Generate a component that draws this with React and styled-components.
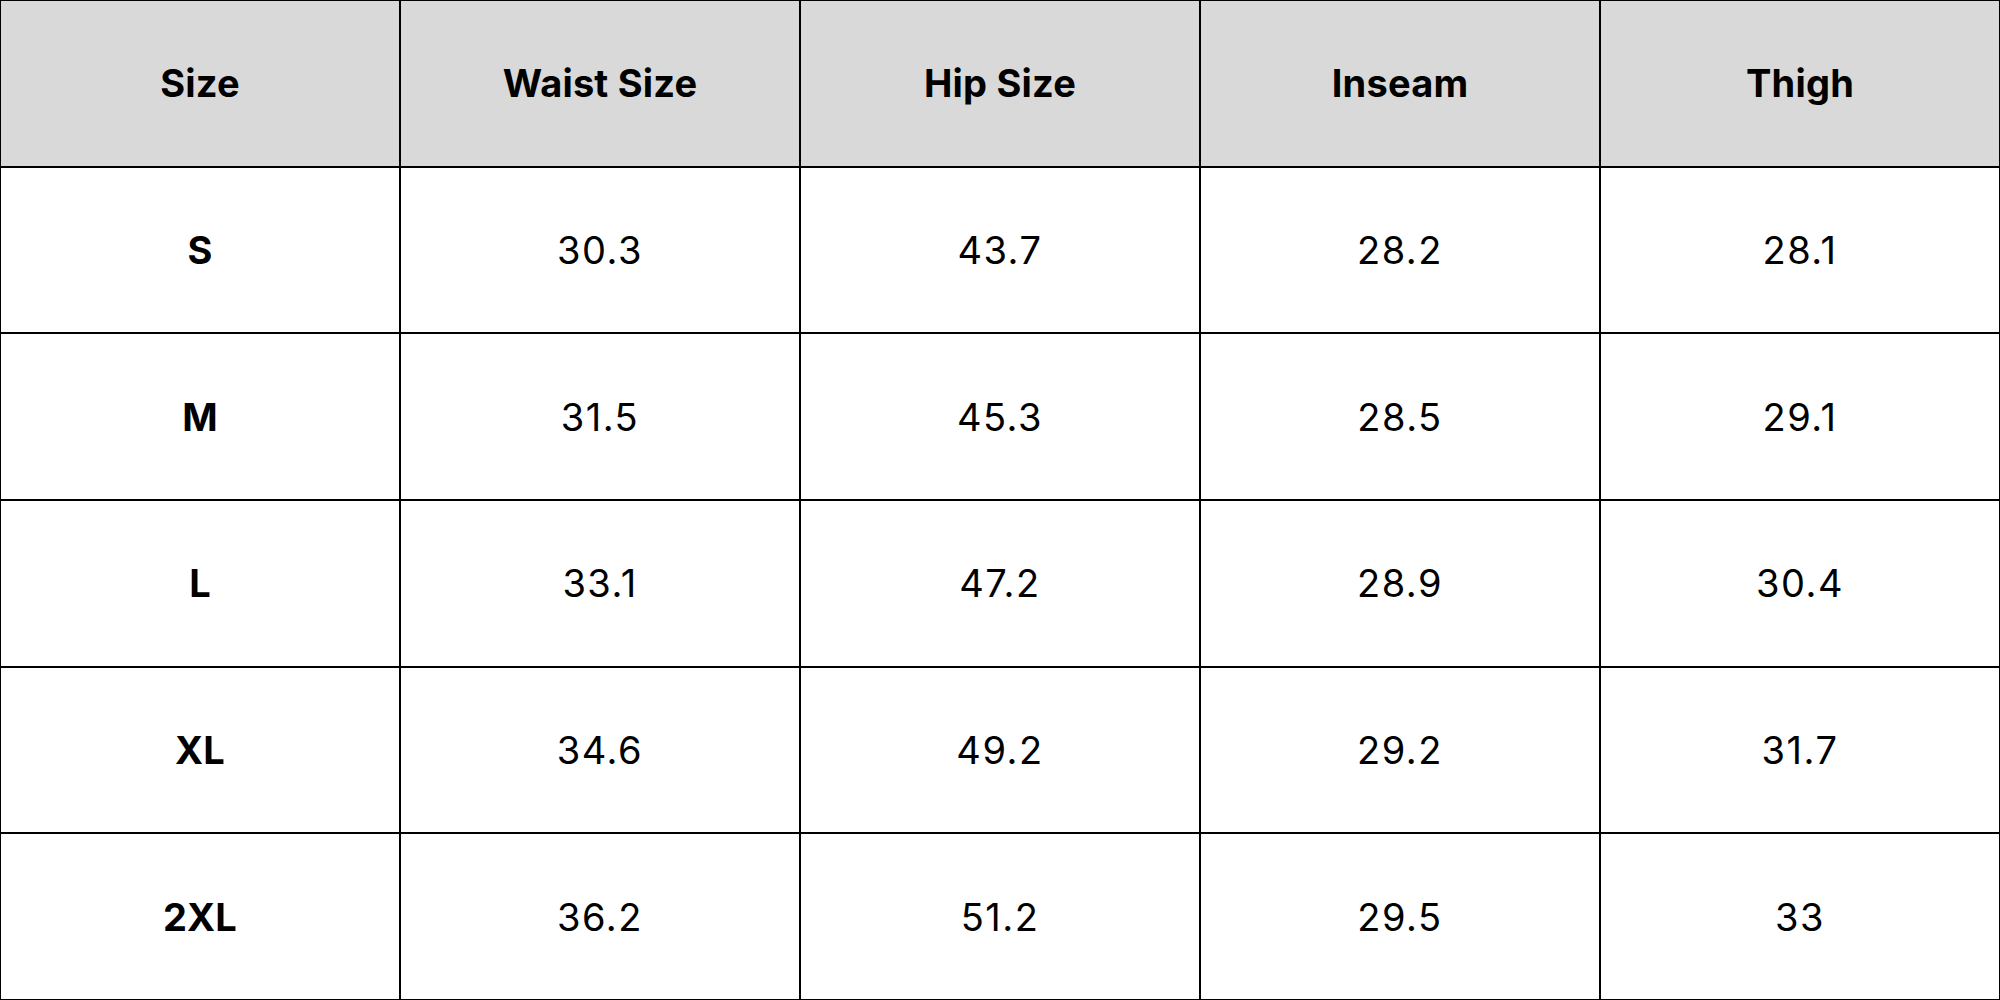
import styled, { createGlobalStyle } from 'styled-components'

const Global = createGlobalStyle`
  html, body {
    margin: 0;
    padding: 0;
    background: #ffffff;
  }
`

const Table = styled.div`
  width: 2000px;
  height: 1000px;
  box-sizing: border-box;
  padding: 1px;
  display: grid;
  grid-template-columns: repeat(5, 1fr);
  grid-template-rows: repeat(6, 1fr);
  gap: 2px;
  background: #000000;
  font-family: Inter, "Liberation Sans", sans-serif;
  color: #000000;
`

const Cell = styled.div`
  display: flex;
  align-items: center;
  justify-content: center;
  background: ${(p) => (p.$head ? '#d9d9d9' : '#ffffff')};
  font-size: 38px;
  font-weight: ${(p) => (p.$bold ? 700 : 400)};
  letter-spacing: ${(p) => (p.$bold ? '0.2px' : '1.5px')};
`

const headers = ['Size', 'Waist Size', 'Hip Size', 'Inseam', 'Thigh']

const rows = [
  ['S', '30.3', '43.7', '28.2', '28.1'],
  ['M', '31.5', '45.3', '28.5', '29.1'],
  ['L', '33.1', '47.2', '28.9', '30.4'],
  ['XL', '34.6', '49.2', '29.2', '31.7'],
  ['2XL', '36.2', '51.2', '29.5', '33'],
]

const App = () => {
  return (
    <>
      <Global />
      <Table>
        {headers.map((h) => (
          <Cell key={h} $head $bold>{h}</Cell>
        ))}
        {rows.map((r) =>
          r.map((v, i) => (
            <Cell key={r[0] + i} $bold={i === 0}>{v}</Cell>
          ))
        )}
      </Table>
    </>
  )
}

export default App
